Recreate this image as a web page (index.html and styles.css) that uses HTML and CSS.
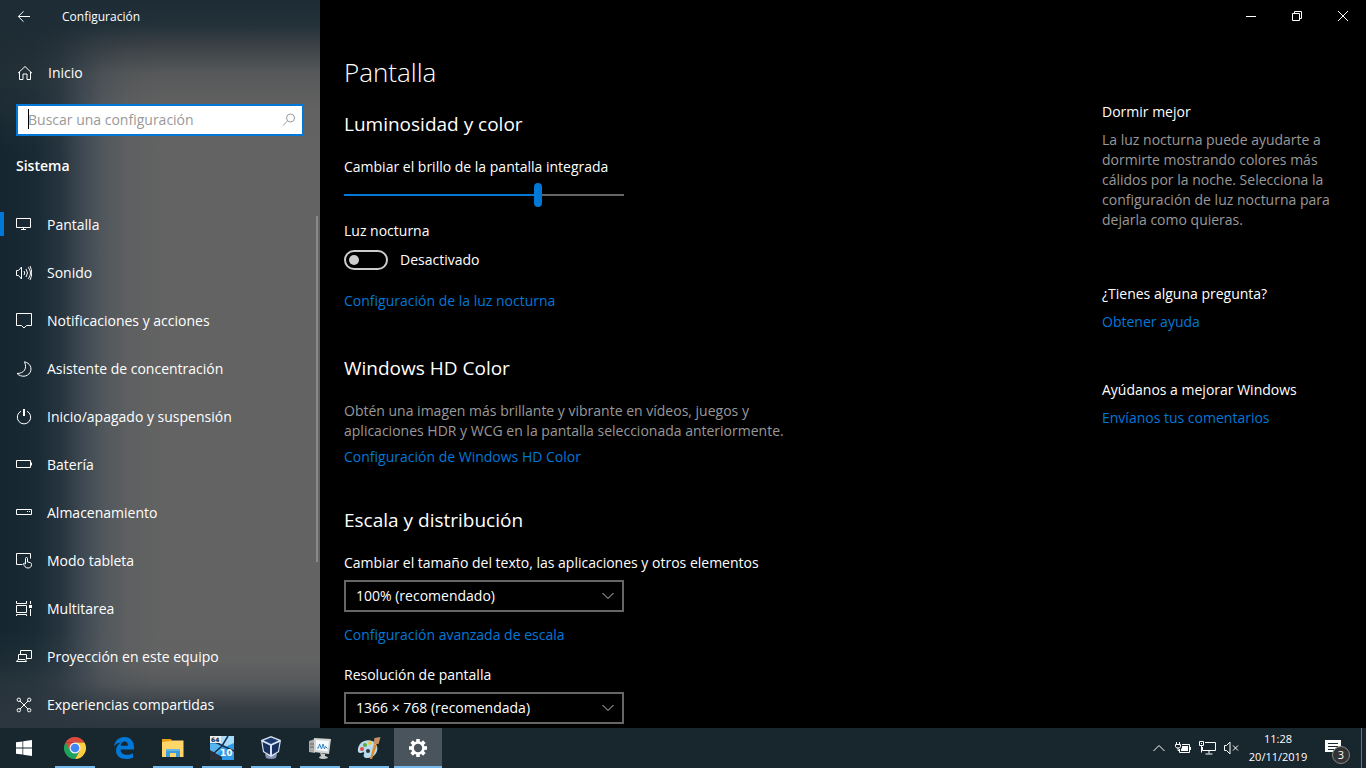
FILE: index.html
```html
<!DOCTYPE html>
<html lang="es">
<head>
<meta charset="utf-8">
<title>Configuración</title>
<link rel="stylesheet" href="styles.css">
</head>
<body>
<div class="desktop">
  <div class="window">
    <div class="sidebar">
      <header class="titlebar">
        <button class="back" aria-label="Atrás"><svg class="line" width="14" height="14" viewBox="0 0 14 14"><path d="M1.500 6.500H13M6.500 1.300L1.300 6.500l5.200 5.200"/></svg></button>
        <span>Configuración</span>
      </header>
      <a class="nav-item home" href="#"><svg class="line" width="16" height="16" viewBox="0 0 16 16"><path d="M1 8.200L8 1.500l7 6.700M2.500 7v7.500h3.500V9h4v5.500h3.500V7"/></svg>Inicio</a>
      <div class="search">
        <input type="text" placeholder="Buscar una configuración" aria-label="Buscar una configuración">
        <span class="caret"></span>
        <svg class="line" width="14" height="14" viewBox="0 0 14 14"><circle cx="8.500" cy="5" r="4"/><path d="M5.500 8L.8 12.700"/></svg>
      </div>
      <h2 class="group">Sistema</h2>
      <nav class="nav">
        <a class="nav-item active" href="#"><svg class="line" width="16" height="16" viewBox="0 0 16 16"><path d="M.5 1.500h14v9H.5zM7.500 10.500v2M5 12.500h5"/></svg>Pantalla</a>
        <a class="nav-item" href="#"><svg class="line" width="16" height="16" viewBox="0 0 16 16"><path d="M.5 5.500h2l3-3.500v12l-3-3.500h-2zM8 6q1.500 2 0 4M10 4q3 4 0 8M12.200 2.200q4.600 5.800 0 11.600M14 1q3.500 7 0 14"/></svg>Sonido</a>
        <a class="nav-item" href="#"><svg class="line" width="16" height="16" viewBox="0 0 16 16"><path d="M.5.5h15v12h-5L8 15l-2.500-2.500h-5z"/></svg>Notificaciones y acciones</a>
        <a class="nav-item" href="#"><svg class="line" width="16" height="16" viewBox="0 0 16 16"><path d="M8.500.8C14 2 16.500 7 14 11.500S5 16.500 1 12.500C8 12.500 11.500 7.500 8.500.8z"/></svg>Asistente de concentración</a>
        <a class="nav-item" href="#"><svg class="line" width="16" height="16" viewBox="0 0 16 16"><path d="M5 2.200a6.700 6.700 0 1 0 6 0"/><path class="thick" d="M8 0v7"/></svg>Inicio/apagado y suspensión</a>
        <a class="nav-item" href="#"><svg class="line" width="16" height="16" viewBox="0 0 16 16"><path d="M.5 3.500h14v7H.5zM15.500 5.500v3"/></svg>Batería</a>
        <a class="nav-item" href="#"><svg class="line" width="16" height="16" viewBox="0 0 16 16"><path d="M.5 4.500h15v5H.5zM11 6.500h1M13 6.500h1"/></svg>Almacenamiento</a>
        <a class="nav-item" href="#"><svg class="line" width="16" height="16" viewBox="0 0 16 16"><path d="M6.500 11.500h-6V.5h14v5M9.500 11V5.500q0-1 1-1t1 1V9l3 .7q1 .3 1 1.800c0 2.500-1.500 3.500-3.500 3.500-2.500 0-4-2-4.500-4.500q1-1 2 .5"/></svg>Modo tableta</a>
        <a class="nav-item" href="#"><svg class="line" width="16" height="16" viewBox="0 0 16 16"><path d="M.5 0v2.500h10V0M.5 4.500h10v7H.5zM.5 15v-1.500h10V15M14.500 0v3M14.500 8v7"/><path class="solid" d="M13 4h3v3h-3z"/></svg>Multitarea</a>
        <a class="nav-item" href="#"><svg class="line" width="16" height="16" viewBox="0 0 16 16"><path d="M4.500 5.500v-4h11v8h-5M2.500 10.500v-5h8v5M.5 12.500l1.500-2h7l1.500 2z"/></svg>Proyección en este equipo</a>
        <a class="nav-item" href="#"><svg class="line" width="16" height="16" viewBox="0 0 16 16"><path d="M4 4l8 8M12 4l-8 8"/><circle cx="2.800" cy="2.800" r="1.700"/><circle cx="13.200" cy="2.800" r="1.700"/><circle cx="2.800" cy="13.200" r="1.700"/><circle cx="13.200" cy="13.200" r="1.700"/></svg>Experiencias compartidas</a>
      </nav>
    </div>

    <div class="page">
      <div class="controls">
        <button aria-label="Minimizar"><svg class="line" width="10" height="10" viewBox="0 0 10 10"><path d="M0 5.500h10"/></svg></button>
        <button aria-label="Restaurar"><svg class="line" width="10" height="10" viewBox="0 0 10 10"><path d="M.5 2.500h7v7h-7zM2.500 2.500v-2h7v7h-2"/></svg></button>
        <button aria-label="Cerrar"><svg class="line" width="10" height="10" viewBox="0 0 10 10"><path d="M0 0l10 10M10 0L0 10"/></svg></button>
      </div>
      <div class="columns">
        <main class="content">
          <h1>Pantalla</h1>
          <section>
            <h2>Luminosidad y color</h2>
            <label for="brillo">Cambiar el brillo de la pantalla integrada</label>
            <input class="slider" id="brillo" type="range" min="0" max="100" value="70">
            <span class="label">Luz nocturna</span>
            <label class="toggle"><input type="checkbox" role="switch" aria-label="Luz nocturna">Desactivado</label>
            <a class="night" href="#">Configuración de la luz nocturna</a>
          </section>
          <section>
            <h2>Windows HD Color</h2>
            <p>Obtén una imagen más brillante y vibrante en vídeos, juegos y aplicaciones HDR y WCG en la pantalla seleccionada anteriormente.</p>
            <a class="hd" href="#">Configuración de Windows HD Color</a>
          </section>
          <section>
            <h2>Escala y distribución</h2>
            <label for="escala">Cambiar el tamaño del texto, las aplicaciones y otros elementos</label>
            <div class="select"><select id="escala"><option>100% (recomendado)</option></select><svg class="line" width="12" height="8" viewBox="0 0 12 8"><path d="M.5 1L6 6.500 11.500 1"/></svg></div>
            <a class="scale" href="#">Configuración avanzada de escala</a>
            <label for="resolucion">Resolución de pantalla</label>
            <div class="select"><select id="resolucion"><option>1366 × 768 (recomendada)</option></select><svg class="line" width="12" height="8" viewBox="0 0 12 8"><path d="M.5 1L6 6.500 11.500 1"/></svg></div>
          </section>
        </main>
        <aside class="help">
          <section>
            <h3>Dormir mejor</h3>
            <p>La luz nocturna puede ayudarte a dormirte mostrando colores más cálidos por la noche. Selecciona la configuración de luz nocturna para dejarla como quieras.</p>
          </section>
          <section>
            <h3>¿Tienes alguna pregunta?</h3>
            <a href="#">Obtener ayuda</a>
          </section>
          <section>
            <h3>Ayúdanos a mejorar Windows</h3>
            <a href="#">Envíanos tus comentarios</a>
          </section>
        </aside>
      </div>
    </div>
  </div>

  <footer class="taskbar">
    <button class="task" aria-label="Inicio"><svg width="16" height="16" viewBox="0 0 16 16" fill="#fff"><path d="M0 2.300L6.500 1.400v6.200H0zM7.200 1.200L16 0v7.600H7.200zM0 8.400h6.500v6.200L0 13.700zM7.200 8.400H16V16l-8.800-1.200z"/></svg></button>
    <button class="task open" aria-label="Google Chrome"><svg width="24" height="24" viewBox="0 0 24 24"><path d="M2.470 6.500A11 11 0 0 1 21.530 6.500H12z" fill="#dd4b3e"/><path d="M2.470 6.500A11 11 0 0 0 12 23l4.760-8.250L12 12z" fill="#1fa35c"/><path d="M21.530 6.500A11 11 0 0 1 12 23l4.760-8.250L12 6.500z" fill="#ffcd40"/><path d="M2.470 6.500l4.770 8.250L12 12V6.500z" fill="#dd4b3e"/><circle cx="12" cy="12" r="5.500" fill="#f4f4f4"/><circle cx="12" cy="12" r="4.300" fill="#4285f4"/></svg></button>
    <button class="task" aria-label="Microsoft Edge"><svg width="24" height="24" viewBox="0 0 24 24"><path d="M2 10.500C3 4.500 7 1 12.300 1 19 1 22 6 22 11v2.500H8.500c.2 4 3.500 5.300 6.500 5.300 2.300 0 4.300-.6 6-1.600v4.400c-2 1-4.500 1.500-7 1.500C8 23.100 4 20 4 14.600c0-4 2-6.700 5.300-8.200C5.500 6.600 3.500 8.300 2 10.500zM8.700 9.700h7.200C16 7.200 14.700 5.600 12.500 5.600S9 7.300 8.700 9.700z" fill="#0078d7"/></svg></button>
    <button class="task open" aria-label="Explorador de archivos"><svg width="24" height="24" viewBox="0 0 24 24"><path d="M1 3h9l1 2v3H1z" fill="#e6a11b"/><path d="M1 6l9-1 1-.5h11.500V21H1z" fill="#ffd667"/><path d="M5 13h14v8h-4v-4H9v4H5z" fill="#3f9bda"/><path d="M5 13h14v2H5z" fill="#65b7e8"/></svg></button>
    <button class="task open" aria-label="C64"><svg width="24" height="24" viewBox="0 0 24 24"><path d="M0 0h24v24H0z" fill="#2f9be6"/><path d="M10 0h14v7l-9 4-6-3z" fill="#a5dcfa"/><path d="M0 8h9l4 4-6 7-7-3z" fill="#58b4ef"/><path d="M0 14l12 7v3H0z" fill="#2a303c"/><path d="M5 6l19 9M18 0l-6 10-9 8" fill="none" stroke="#14304c" stroke-width="1.500"/><path d="M0 0h11v7H0z" fill="#eee"/><text x="1" y="6" class="tiny">64</text><text x="10" y="20" class="ten">10</text></svg></button>
    <button class="task open" aria-label="VirtualBox"><svg width="24" height="24" viewBox="0 0 24 24"><path d="M6 18l6-1 6 1-1 4q-5 2-10 0z" fill="#8592b5"/><path d="M12 0l10 4-2 12-8 5-8-5L2 4z" fill="#d8e2f0"/><path d="M12 1.500L19.500 4.500 12 8 4.500 4.500z" fill="#1d3a6e"/><path d="M3.500 6l7.500 3.500v9.300L5 15.200zM20.500 6L13 9.500v9.300l6-3.600z" fill="#17305f"/></svg></button>
    <button class="task open" aria-label="Monitor"><svg width="24" height="24" viewBox="0 0 24 24"><path d="M1 5l6-2v14l-6-1z" fill="#a9aaa9"/><path d="M2 8h4M2 11h4" stroke="#676968"/><path d="M6 2l17 1-2 15-15-2z" fill="#d4d5d3"/><path d="M8 4l13 1-1.500 10.500L8 14z" fill="#f3f9fc"/><path d="M9 12h1.500l1-4 2 5 1.500-5 1.500 5 1-2.500 2 2" fill="none" stroke="#3086c4"/><path d="M12 17l5 1v2q3 .5 3 2-5 2-9 0 0-1.500 2-2z" fill="#c8c9c8"/></svg></button>
    <button class="task open" aria-label="Paint"><svg width="26" height="24" viewBox="0 0 26 24"><path d="M4 8C8 3 17 3 20 8c4 6-1 14-9 14-3 0-4-2-3-4s-1-2-3-1c-4 1-4-5-1-9z" fill="#b8dcef"/><circle cx="6" cy="13" r="2" fill="#e34b42"/><circle cx="9" cy="9" r="2" fill="#59ac45"/><circle cx="14" cy="7" r="2" fill="#f0c63d"/><circle cx="12" cy="15" r="2" fill="#26343d"/><path d="M14 23l4-15 3 1-5 14z" fill="#e38b2b"/><path d="M17.500 8l1-6 6-1-2 7z" fill="#c69263"/></svg></button>
    <button class="task open current" aria-label="Configuración"><svg width="20" height="20" viewBox="0 0 20 20"><g fill="#fff"><path d="M8.200 1h3.600v18H8.200z"/><path d="M8.200 1h3.600v18H8.200z" transform="rotate(45 10 10)"/><path d="M8.200 1h3.600v18H8.200z" transform="rotate(90 10 10)"/><path d="M8.200 1h3.600v18H8.200z" transform="rotate(135 10 10)"/><circle cx="10" cy="10" r="6.800"/></g><circle cx="10" cy="10" r="4.200" fill="#4a545c"/></svg></button>
    <div class="tray">
      <button aria-label="Mostrar iconos ocultos"><svg class="line" width="12" height="8" viewBox="0 0 12 8"><path d="M.5 7L6 1.500 11.500 7"/></svg></button>
      <button aria-label="Batería"><svg class="line" width="16" height="14" viewBox="0 0 16 14"><path d="M1.500 1v2.500M4.500 1v2.500M.5 3.500h5v2q0 1.500-2.500 1.500t-2.500-1.500zM3 7v2.500h2M7 3.500h7.500v8h-10V8M15.500 6v3"/><path class="solid" d="M7 5h6v5H6V8l1-1z"/></svg></button>
      <button aria-label="Red"><svg class="line" width="17" height="14" viewBox="0 0 17 14"><path d="M6 1.500h10.500v8H3.500V6M10 9.500v3M6.500 13h7M.5.5h4v4h-4zM2.500 2v1M2.500 4.500v7"/></svg></button>
      <button aria-label="Volumen"><svg class="line" width="15" height="14" viewBox="0 0 15 14"><path d="M.5 4.500h2L6 1v12L2.500 9.500h-2zM9 4.500l5 5M14 4.500l-5 5"/></svg></button>
      <time class="clock"><span>11:28</span><span>20/11/2019</span></time>
      <button class="center" aria-label="Notificaciones"><svg width="16" height="16" viewBox="0 0 16 16"><path d="M0 0h16v12h-3v4l-4-4H0z" fill="#fff"/><path d="M3 3.500h10M3 6.500h10M3 9.500h6" stroke="#1a2830"/></svg><span class="badge">3</span></button>
      <span class="peek"></span>
    </div>
  </footer>
</div>
</body>
</html>
```
FILE: styles.css
```css
* { box-sizing: border-box; }
body, h1, h2, h3, p { margin: 0; }
body {
  font: 14px/20px "Open Sans", "Noto Sans", sans-serif;
  color: #fff;
  background: #000;
}
button { padding: 0; border: 0; background: none; color: inherit; font: inherit; }
a { color: #0078d7; text-decoration: none; }
svg { flex: none; display: block; }
.line { fill: none; stroke: #fff; stroke-width: 1; }
.line .thick { stroke-width: 2; }
.line .solid { fill: #fff; stroke: none; }

.desktop { display: flex; flex-direction: column; height: 100vh; overflow: hidden; }
.window { flex: 1; min-height: 0; display: flex; }

.sidebar {
  position: relative;
  flex: none;
  width: 320px;
  overflow: hidden;
  background:
    linear-gradient(180deg, #1d2c35 0, rgba(29, 44, 53, .92) 24px, rgba(38, 48, 55, .65) 46px, rgba(60, 65, 68, .3) 74px, rgba(90, 90, 90, .1) 110px, transparent 150px),
    linear-gradient(0deg, #2b363e 0, rgba(46, 56, 64, .85) 20px, rgba(66, 72, 77, .4) 44px, rgba(90, 92, 94, .1) 68px, transparent 100px),
    linear-gradient(90deg, #152630 0, #192a34 34px, #26343e 60px, #3b4650 80px, #50575c 102px, #5d5f60 126px, #636363 160px, #636363 100%);
}
.titlebar { display: flex; align-items: center; height: 33px; font-size: 12px; }
.back { width: 48px; height: 32px; display: flex; align-items: center; justify-content: center; }
.titlebar span { padding-left: 14px; }
.nav-item { display: flex; align-items: center; gap: 15px; height: 48px; padding-left: 16px; color: #fff; }
.home { margin-top: 16px; padding-left: 17px; }
.search { position: relative; margin: 7px 16px 0; height: 32px; }
.search input {
  width: 100%; height: 32px; padding: 0 32px 2px 10px;
  border: 2px solid #0078d7; border-radius: 0; outline: 0;
  background: #fff; color: #000; font: inherit;
}
.search input::placeholder { color: #999; opacity: 1; }
.search svg { position: absolute; right: 8px; top: 9px; stroke: #999; }
.caret { position: absolute; left: 12px; top: 5px; width: 1px; height: 20px; background: #000; }
.group { margin: 20px 16px 25px; font-size: 14px; line-height: 20px; font-weight: 600; }
.nav .active { position: relative; }
.nav .active::before { content: ""; position: absolute; left: 0; top: 11px; width: 4px; height: 24px; background: #0078d7; }
.sidebar::after { content: ""; position: absolute; right: 2px; top: 216px; width: 2px; height: 346px; background: #8a8a8a; }

.page { flex: 1; min-width: 0; background: #000; }
.controls { display: flex; justify-content: flex-end; height: 32px; }
.controls button { width: 46px; display: flex; align-items: center; justify-content: center; }
.columns { display: flex; justify-content: space-between; padding: 22px 16px 0 24px; }
.content { width: 460px; }
h1 { font-size: 26px; line-height: 36px; font-weight: 300; }
.content h2 { margin: 20px 0 19px; font-size: 19px; line-height: 28px; font-weight: 400; }
.content section + section h2 { margin-top: 43px; }
.content section:last-child h2 { margin-top: 39px; }
.content label, .content .label, .content a { display: block; }
.content p, .help p { color: #999; }

.slider { -webkit-appearance: none; appearance: none; display: block; width: 280px; height: 24px; margin: 6px 0 14px; background: linear-gradient(#0078d7, #0078d7) 0 11px / 70% 2px no-repeat, linear-gradient(#666, #666) 0 11px / 100% 2px no-repeat; }
.slider::-webkit-slider-thumb { -webkit-appearance: none; width: 8px; height: 24px; border-radius: 4px; background: #0078d7; }
.content .toggle { display: flex; align-items: center; gap: 12px; margin-top: 9px; }
.toggle input { appearance: none; display: flex; align-items: center; width: 44px; height: 20px; margin: 0; padding-left: 3px; border: 2px solid #ccc; border-radius: 10px; }
.toggle input::before { content: ""; width: 10px; height: 10px; border-radius: 50%; background: #ccc; }
.content .night { margin-top: 21px; }
.content .hd { margin-top: 6px; }
.content .scale { margin: 13px 0 20px; }
.select { position: relative; width: 280px; margin-top: 7px; }
.select select { appearance: none; display: block; width: 100%; height: 32px; padding: 0 32px 0 10px; border: 2px solid #666; border-radius: 0; background: #000; color: #fff; font: inherit; }
.select svg { position: absolute; right: 10px; top: 12px; pointer-events: none; stroke: #ccc; }

.help { width: 248px; padding-top: 48px; }
.help section + section { margin-top: 48px; }
.help section:nth-child(2) { margin-top: 54px; }
.help h3 { margin-bottom: 8px; font-size: 14px; line-height: 20px; font-weight: 400; }
.help a { display: block; }

.taskbar { flex: none; display: flex; height: 40px; background: #18262e; }
.task { position: relative; width: 48px; margin-right: 1px; display: flex; align-items: center; justify-content: center; }
.task:first-child { margin-right: 3px; }
.open::after { content: ""; position: absolute; left: 4px; right: 4px; bottom: 0; height: 2px; background: #76b9ed; }
.current { background: #4a545c; }
.current::after { left: 0; right: 0; }
.tiny { font: 700 6px "DejaVu Sans", sans-serif; fill: #111; }
.ten { font: 700 9px "DejaVu Sans", sans-serif; fill: #fff; }
.tray { display: flex; align-items: center; margin-left: auto; height: 40px; }
.tray button { width: 24px; height: 40px; display: flex; align-items: center; justify-content: center; }
.clock { display: flex; flex-direction: column; align-items: center; width: 70px; font-size: 11px; line-height: 18px; }
.tray .center { position: relative; width: 48px; justify-content: flex-start; padding-left: 12px; }
.badge { position: absolute; left: 19px; top: 18px; width: 18px; height: 18px; border: 1px solid #888; border-radius: 50%; background: #333; font-size: 11px; line-height: 16px; text-align: center; }
.peek { width: 5px; height: 40px; border-left: 1px solid #68737a; }
```
